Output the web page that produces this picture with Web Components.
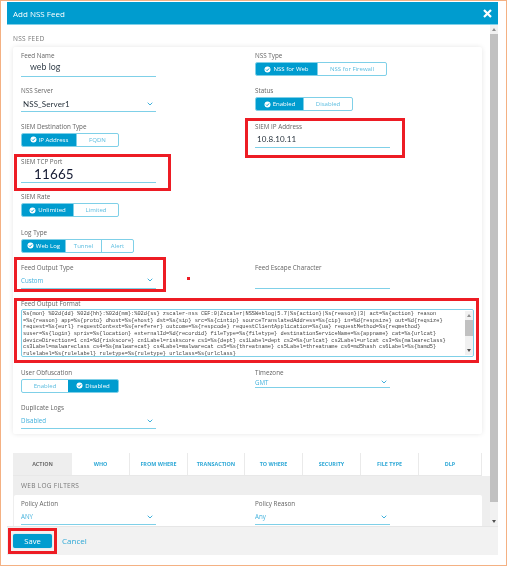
<!DOCTYPE html>
<html lang="en"><head><meta charset="utf-8"><title>Add NSS Feed</title>
<style>
html,body{margin:0;padding:0;background:#fff}
body{font-family:"Open Sans","Liberation Sans",sans-serif;-webkit-font-smoothing:antialiased}
</style></head>
<body>
<nss-frame>
  <nss-dialog heading="Add NSS Feed">
    <nss-section heading="NSS FEED">
      <nss-card>
        <nss-field label="Feed Name" value="web log" variant="name"></nss-field>
        <nss-field label="NSS Type"><nss-toggle options="NSS for Web|NSS for Firewall" widths="61,69"></nss-toggle></nss-field>
        <nss-field label="NSS Server" value="NSS_Server1" variant="dark" select></nss-field>
        <nss-field label="Status"><nss-toggle options="Enabled|Disabled" widths="47,49"></nss-toggle></nss-field>
        <nss-field label="SIEM Destination Type"><nss-toggle options="IP Address|FQDN" widths="54,42"></nss-toggle></nss-field>
        <nss-field label="SIEM IP Address" value="10.8.10.11" variant="dark"></nss-field>
        <nss-field label="SIEM TCP Port" value="11665" variant="port"></nss-field>
        <span></span>
        <nss-field label="SIEM Rate"><nss-toggle options="Unlimited|Limited" widths="51,45"></nss-toggle></nss-field>
        <span></span>
        <nss-field label="Log Type"><nss-toggle options="Web Log|Tunnel|Alert" widths="43,36,32"></nss-toggle></nss-field>
        <span></span>
        <nss-field label="Feed Output Type" value="Custom" select></nss-field>
        <nss-field label="Feed Escape Character"></nss-field>
        <nss-format style="grid-column:1 / -1"></nss-format>
        <nss-field label="User Obfuscation"><nss-toggle options="Enabled|Disabled" widths="46,50" active="1"></nss-toggle></nss-field>
        <nss-field label="Timezone" value="GMT" select short></nss-field>
        <nss-field label="Duplicate Logs" value="Disabled" select></nss-field>
      </nss-card>
    </nss-section>
    <nss-tabs tabs="ACTION|WHO|FROM WHERE|TRANSACTION|TO WHERE|SECURITY|FILE TYPE|DLP"></nss-tabs>
    <nss-filters heading="WEB LOG FILTERS">
      <nss-field label="Policy Action" value="ANY" select></nss-field>
      <nss-field label="Policy Reason" value="Any" select></nss-field>
    </nss-filters>
    <nss-button slot="footer" kind="primary">Save</nss-button>
    <nss-button slot="footer" kind="link">Cancel</nss-button>
  </nss-dialog>
  <nss-mark x="245" y="118" w="160" h="40"></nss-mark>
  <nss-mark x="14" y="154" w="157" h="37"></nss-mark>
  <nss-mark x="14" y="257" w="152" h="35"></nss-mark>
  <nss-mark x="14" y="298" w="465" h="65"></nss-mark>
  <nss-mark x="8" y="528" w="49" h="26"></nss-mark>
  <nss-mark x="187" y="277" w="3" h="3" solid></nss-mark>
</nss-frame>
<script>
const CHEV='<svg width="6" height="4" viewBox="0 0 6 4" fill="none" stroke="#3fb0dc" stroke-width="1"><path d="M.7.7 3 3l2.3-2.3"/></svg>';
const CHECK='<svg width="7" height="7" viewBox="0 0 7 7"><circle cx="3.5" cy="3.5" r="3" fill="#fff"/><path d="M2 3.6 3.1 4.7 5 2.5" fill="none" stroke="#009ccf" stroke-width="1"/></svg>';
function define(name,css,html,proto){
  customElements.define(name,class extends HTMLElement{
    connectedCallback(){
      if(this.shadowRoot)return;
      const r=this.attachShadow({mode:'open'});
      r.innerHTML='<style>'+css+'</style>'+(typeof html==='function'?html(this):html);
      if(proto)proto(this,r);
    }
  });
}
define('nss-frame',`:host{display:block;position:relative;box-sizing:border-box;width:507px;height:566px;overflow:hidden;border:1px solid #f4b183;padding:1px 7px 10px 6px;filter:blur(.4px)}`,`<slot></slot>`);
define('nss-dialog',`:host{display:flex;flex-direction:column;width:491px;height:553px}
header{flex:none;height:22px;background:#009ccf;border-bottom:1px solid #7fd0e8;display:flex;align-items:center;justify-content:space-between;padding:0 6px;color:#fff;font-size:8px}
main{flex:1;min-height:0;display:flex}
.content{flex:1;min-width:0;overflow:hidden;background:#fff}
footer{flex:none;height:29px;background:#f2f2f2;border-top:1px solid #e6e6e6;box-sizing:border-box;display:flex;align-items:center;gap:10px;padding:0 6px}
svg{display:block}`,
h=>`<header><span>${h.getAttribute('heading')}</span><svg width="9" height="9" viewBox="0 0 9 9" stroke="#fff" stroke-width="2.2"><path d="M1 1 8 8M8 1 1 8"/></svg></header>
<main><div class="content"><slot></slot></div><nss-scrollbar thumbbottom="33"></nss-scrollbar></main>
<footer><slot name="footer"></slot></footer>`);
define('nss-scrollbar',`:host{display:flex;flex:none;flex-direction:column;width:8px;background:#f1f1f1}
.a{flex:none;height:9px;display:flex;align-items:center;justify-content:center}
.t{flex:1;min-height:0;display:flex;flex-direction:column}
.th{background:#c1c1c1}
svg{display:block}`,
h=>{const tail=+h.getAttribute('thumbbottom');
return `<div class="a"><svg width="4" height="3" viewBox="0 0 4 3"><path d="M2 0 4 3H0z" fill="#8f8f8f"/></svg></div>
<div class="t"><div class="th" style="flex:1"></div><div style="flex:none;height:${tail-18}px"></div></div>
<div class="a"><svg width="4" height="3" viewBox="0 0 4 3"><path d="M0 0H4L2 3z" fill="#505050"/></svg></div>`});
define('nss-section',`:host{display:block;padding:10px 8px 0 6px}
h2{margin:0 0 4px;font-weight:400;font-size:6.5px;line-height:8px;letter-spacing:.3px;color:#777}`,
h=>`<h2>${h.getAttribute('heading')}</h2><slot></slot>`);
define('nss-card',`:host{display:grid;grid-template-columns:234px 1fr;row-gap:9.33px;background:#fff;border-radius:2px;box-shadow:0 0 5px rgba(0,0,0,.1);padding:4px 0 4.7px 8px;height:387px;box-sizing:border-box;align-content:start}`,`<slot></slot>`);
define('nss-field',`:host{display:block;width:135px;height:26px;position:relative}
label{display:block;height:10px;font-size:6.3px;line-height:10px;color:#656565}
.c{display:flex;align-items:center;justify-content:space-between;box-sizing:border-box;height:16px;font-size:6.2px;color:#3fb0dc;border-bottom:1px solid #7fd0e8;padding:0 3px 0 0}
:host([short]) .c{height:10px}
.tog{height:16px;padding-top:1px;box-sizing:border-box}
.v{white-space:nowrap}
.name{font:8.8px Lato,sans-serif;color:#333f4a;padding-left:9px;position:relative;top:-2px}
.dark{font:8px Lato,sans-serif;color:#27323c;padding-left:2px;letter-spacing:.1px}
.port{font:13.4px Lato,sans-serif;color:#141a33;padding-left:13px;letter-spacing:.2px;position:relative;top:-.5px}
svg{display:block}`,
h=>{const lab=h.getAttribute('label');
 if(h.children.length) return `<label>${lab}</label><div class="tog"><slot></slot></div>`;
 const val=h.getAttribute('value')||'';const vr=h.getAttribute('variant')||'';
 return `<label>${lab}</label><div class="c"><span class="v ${vr}">${val}</span>${h.hasAttribute('select')?CHEV:''}</div>`});
define('nss-toggle',`:host{display:block}
.g{display:grid;width:max-content;height:14px;box-sizing:border-box;border:1px solid #7fd0e8;border-radius:2px;overflow:hidden;background:#fff}
.o{display:flex;align-items:center;justify-content:center;gap:2px;font-size:6.05px;color:#5cbde0;white-space:nowrap;border-left:1px solid #7fd0e8}
.o:first-child{border-left:0}
.o.on{background:#009ccf;color:#fff;border-left:0}
svg{display:block}`,
h=>{const o=h.getAttribute('options').split('|'),w=h.getAttribute('widths').split(','),a=+(h.getAttribute('active')||0);
 return `<div class="g" style="grid-template-columns:${w.map(x=>x+'px').join(' ')}">${o.map((t,i)=>`<div class="o ${i===a?'on':''}">${i===a?CHECK:''}<span>${t}</span></div>`).join('')}</div>`});
define('nss-format',`:host{display:block;height:60.33px}
label{display:block;height:10.7px;font-size:6.3px;line-height:10px;color:#656565;padding-top:.3px;box-sizing:border-box}
.box{box-sizing:border-box;width:453px;height:48.5px;border:1px solid #7fd0e8;border-radius:2px;display:flex;overflow:hidden;background:#fff}
pre{flex:1;margin:0;padding:1px 0 0 1px;font:5.3px/6.67px "Liberation Mono",monospace;color:#444;overflow:hidden;white-space:pre}
nss-scrollbar{margin:1px 0}`,
`<label>Feed Output Format</label><div class="box"><pre>%s{mon} %02d{dd} %02d{hh}:%02d{mm}:%02d{ss} zscaler-nss CEF:0|Zscaler|NSSWeblog|5.7|%s{action}|%s{reason}|3| act=%s{action} reason
=%s{reason} app=%s{proto} dhost=%s{ehost} dst=%s{sip} src=%s{cintip} sourceTranslatedAddress=%s{cip} in=%d{respsize} out=%d{reqsize}
request=%s{eurl} requestContext=%s{ereferer} outcome=%s{respcode} requestClientApplication=%s{ua} requestMethod=%s{reqmethod}
suser=%s{login} spriv=%s{location} externalId=%d{recordid} fileType=%s{filetype} destinationServiceName=%s{appname} cat=%s{urlcat}
deviceDirection=1 cn1=%d{riskscore} cn1Label=riskscore cs1=%s{dept} cs1Label=dept cs2=%s{urlcat} cs2Label=urlcat cs3=%s{malwareclass}
cs3Label=malwareclass cs4=%s{malwarecat} cs4Label=malwarecat cs5=%s{threatname} cs5Label=threatname cs6=md5hash cs6Label=%s{bamd5}
rulelabel=%s{rulelabel} ruletype=%s{ruletype} urlclass=%s{urlclass}</pre><nss-scrollbar thumbbottom="28"></nss-scrollbar></div>`);
define('nss-tabs',`:host{display:grid;grid-template-columns:59px 58px 58px 57px 58px 58px 58px 63px;margin:19px 8px 0 6px;height:23px;box-sizing:border-box;border-bottom:1px solid #e8e8e8}
div{display:flex;align-items:center;justify-content:center;font-size:5.4px;font-weight:700;color:#2ea8d6;border-right:1px solid #eaeaea;white-space:nowrap}
div.on{background:#eee;color:#6d6d6d;border-right:0}`,
h=>h.getAttribute('tabs').split('|').map((t,i)=>`<div class="${i?'':'on'}">${t}</div>`).join(''));
define('nss-filters',`:host{display:block;background:#eee;margin:0 0 0 6px;height:50px;overflow:hidden}
h3{margin:0;font-weight:400;font-size:6.5px;line-height:19px;letter-spacing:.3px;color:#777;padding-left:8px}
.card{display:grid;grid-template-columns:234px 1fr;background:#fff;border-radius:2px 2px 0 0;padding:4px 0 0 7px;margin:0 8px 0 1px;height:31px;box-sizing:border-box}`,
h=>`<h3>${h.getAttribute('heading')}</h3><div class="card"><slot></slot></div>`);
define('nss-button',`:host{display:inline-flex;align-items:center}
.primary{display:block;width:39px;height:14px;line-height:14px;text-align:center;background:#009ccf;color:#fff;border-radius:2px;font-size:7.6px;box-shadow:0 0 1px #66c4e4}
.link{color:#2ea8d6;font-size:8px;position:relative;top:-1px}`,
h=>`<span class="${h.getAttribute('kind')}"><slot></slot></span>`);
define('nss-mark',`:host{display:block;position:absolute;box-sizing:border-box;border:3px solid #ed1c24;pointer-events:none}
:host([solid]){background:#ed1c24;border:0}`,'',h=>{
 h.style.left=(+h.getAttribute('x')-1)+'px';h.style.top=(+h.getAttribute('y')-1)+'px';
 h.style.width=h.getAttribute('w')+'px';h.style.height=h.getAttribute('h')+'px';});
</script>
</body></html>
